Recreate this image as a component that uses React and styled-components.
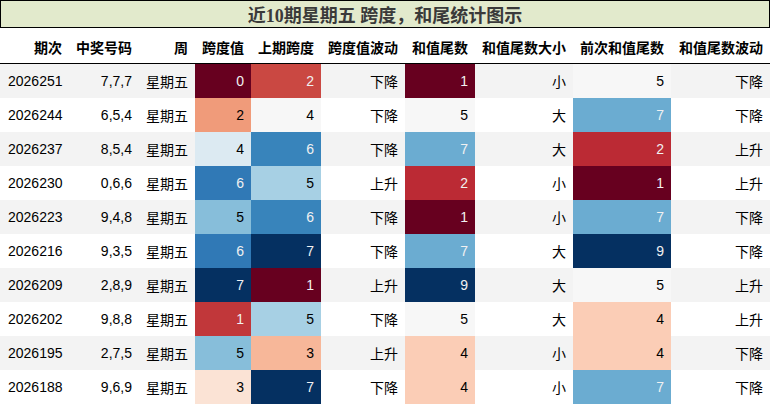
import React from "react";
import styled, { createGlobalStyle } from "styled-components";

const GlobalStyle = createGlobalStyle`
  html, body { margin: 0; padding: 0; background: #ffffff; }
  body { font-family: "Liberation Sans", "Noto Sans CJK SC", sans-serif; }
`;

const STOPS = [
  [0.40392, 0.0, 0.12157],
  [0.69804, 0.09412, 0.16863],
  [0.83922, 0.37647, 0.30196],
  [0.95686, 0.64706, 0.5098],
  [0.99216, 0.85882, 0.78039],
  [0.96863, 0.96863, 0.96863],
  [0.81961, 0.89804, 0.94118],
  [0.57255, 0.77255, 0.87059],
  [0.26275, 0.57647, 0.76471],
  [0.12941, 0.4, 0.67451],
  [0.01961, 0.18824, 0.38039],
];

function rdbu(t) {
  const x = Math.min(1, Math.max(0, t)) * 10;
  const i = Math.min(9, Math.floor(x));
  const f = x - i;
  const a = STOPS[i];
  const b = STOPS[i + 1];
  return [0, 1, 2].map((k) => a[k] + (b[k] - a[k]) * f);
}

function lum(c) {
  const lin = c.map((v) => (v <= 0.03928 ? v / 12.92 : Math.pow((v + 0.055) / 1.055, 2.4)));
  return 0.2126 * lin[0] + 0.7152 * lin[1] + 0.0722 * lin[2];
}

function cellColors(v, min, max) {
  const c = rdbu((v - min) / (max - min));
  const hex = "#" + c.map((x) => Math.round(x * 255).toString(16).padStart(2, "0")).join("");
  return { bg: hex, fg: lum(c) < 0.408 ? "#f1f1f1" : "#000000" };
}

const rows = [
  ["2026251", "7,7,7", "星期五", 0, 2, "下降", 1, "小", 5, "下降"],
  ["2026244", "6,5,4", "星期五", 2, 4, "下降", 5, "大", 7, "下降"],
  ["2026237", "8,5,4", "星期五", 4, 6, "下降", 7, "大", 2, "上升"],
  ["2026230", "0,6,6", "星期五", 6, 5, "上升", 2, "小", 1, "上升"],
  ["2026223", "9,4,8", "星期五", 5, 6, "下降", 1, "小", 7, "下降"],
  ["2026216", "9,3,5", "星期五", 6, 7, "下降", 7, "大", 9, "下降"],
  ["2026209", "2,8,9", "星期五", 7, 1, "上升", 9, "大", 5, "上升"],
  ["2026202", "9,8,8", "星期五", 1, 5, "下降", 5, "大", 4, "上升"],
  ["2026195", "2,7,5", "星期五", 5, 3, "上升", 4, "小", 4, "下降"],
  ["2026188", "9,6,9", "星期五", 3, 7, "下降", 4, "小", 7, "下降"],
];

const headers = ["期次", "中奖号码", "周", "跨度值", "上期跨度", "跨度值波动", "和值尾数", "和值尾数大小", "前次和值尾数", "和值尾数波动"];
const gradientCols = [3, 4, 6, 8];

const ranges = {};
gradientCols.forEach((ci) => {
  const vals = rows.map((r) => r[ci]);
  ranges[ci] = [Math.min(...vals), Math.max(...vals)];
});

const COLS = "69px 70px 56px 56px 70px 84px 70px 98px 98px 99px";

const Page = styled.div`
  width: 770px;
  height: 405px;
  overflow: hidden;
  background: #ffffff;
`;

const TitleBar = styled.div`
  height: 26px;
  border: 1px solid #000000;
  background: #e2eacc;
  display: flex;
  align-items: center;
  justify-content: center;
  font-family: "Liberation Serif", "Noto Sans CJK SC", serif;
  font-weight: bold;
  font-size: 18px;
  color: #3a3a3a;
  box-sizing: content-box;
  width: 768px;
`;

const HeaderRow = styled.div`
  display: grid;
  grid-template-columns: ${COLS};
  height: 35px;
  border-bottom: 1px solid #000000;
  background: #ffffff;
`;

const HeadCell = styled.div`
  display: flex;
  align-items: center;
  justify-content: flex-end;
  padding: 2px 7px 0;
  font-weight: bold;
  font-size: 14px;
  color: #000000;
  white-space: nowrap;
`;

const Row = styled.div`
  display: grid;
  grid-template-columns: ${COLS};
  height: 34px;
  background: ${(p) => (p.$striped ? "#f3f3f3" : "#ffffff")};
`;

const Cell = styled.div`
  display: flex;
  align-items: center;
  justify-content: ${(p) => (p.$left ? "flex-start" : "flex-end")};
  padding: 0 7px 0 ${(p) => (p.$left ? "8px" : "7px")};
  font-size: 14px;
  white-space: nowrap;
  background: ${(p) => p.$bg || "transparent"};
  color: ${(p) => p.$fg || "#000000"};
`;

export default function App() {
  return (
    <>
      <GlobalStyle />
      <Page>
        <TitleBar>近10期星期五 跨度，和尾统计图示</TitleBar>
        <HeaderRow>
          {headers.map((h) => (
            <HeadCell key={h}>{h}</HeadCell>
          ))}
        </HeaderRow>
        {rows.map((r, ri) => (
          <Row key={r[0]} $striped={ri % 2 === 0}>
            {r.map((v, ci) => {
              if (gradientCols.includes(ci)) {
                const { bg, fg } = cellColors(v, ranges[ci][0], ranges[ci][1]);
                return (
                  <Cell key={ci} $bg={bg} $fg={fg}>
                    {v}
                  </Cell>
                );
              }
              return (
                <Cell key={ci} $left={ci === 0}>
                  {v}
                </Cell>
              );
            })}
          </Row>
        ))}
      </Page>
    </>
  );
}
